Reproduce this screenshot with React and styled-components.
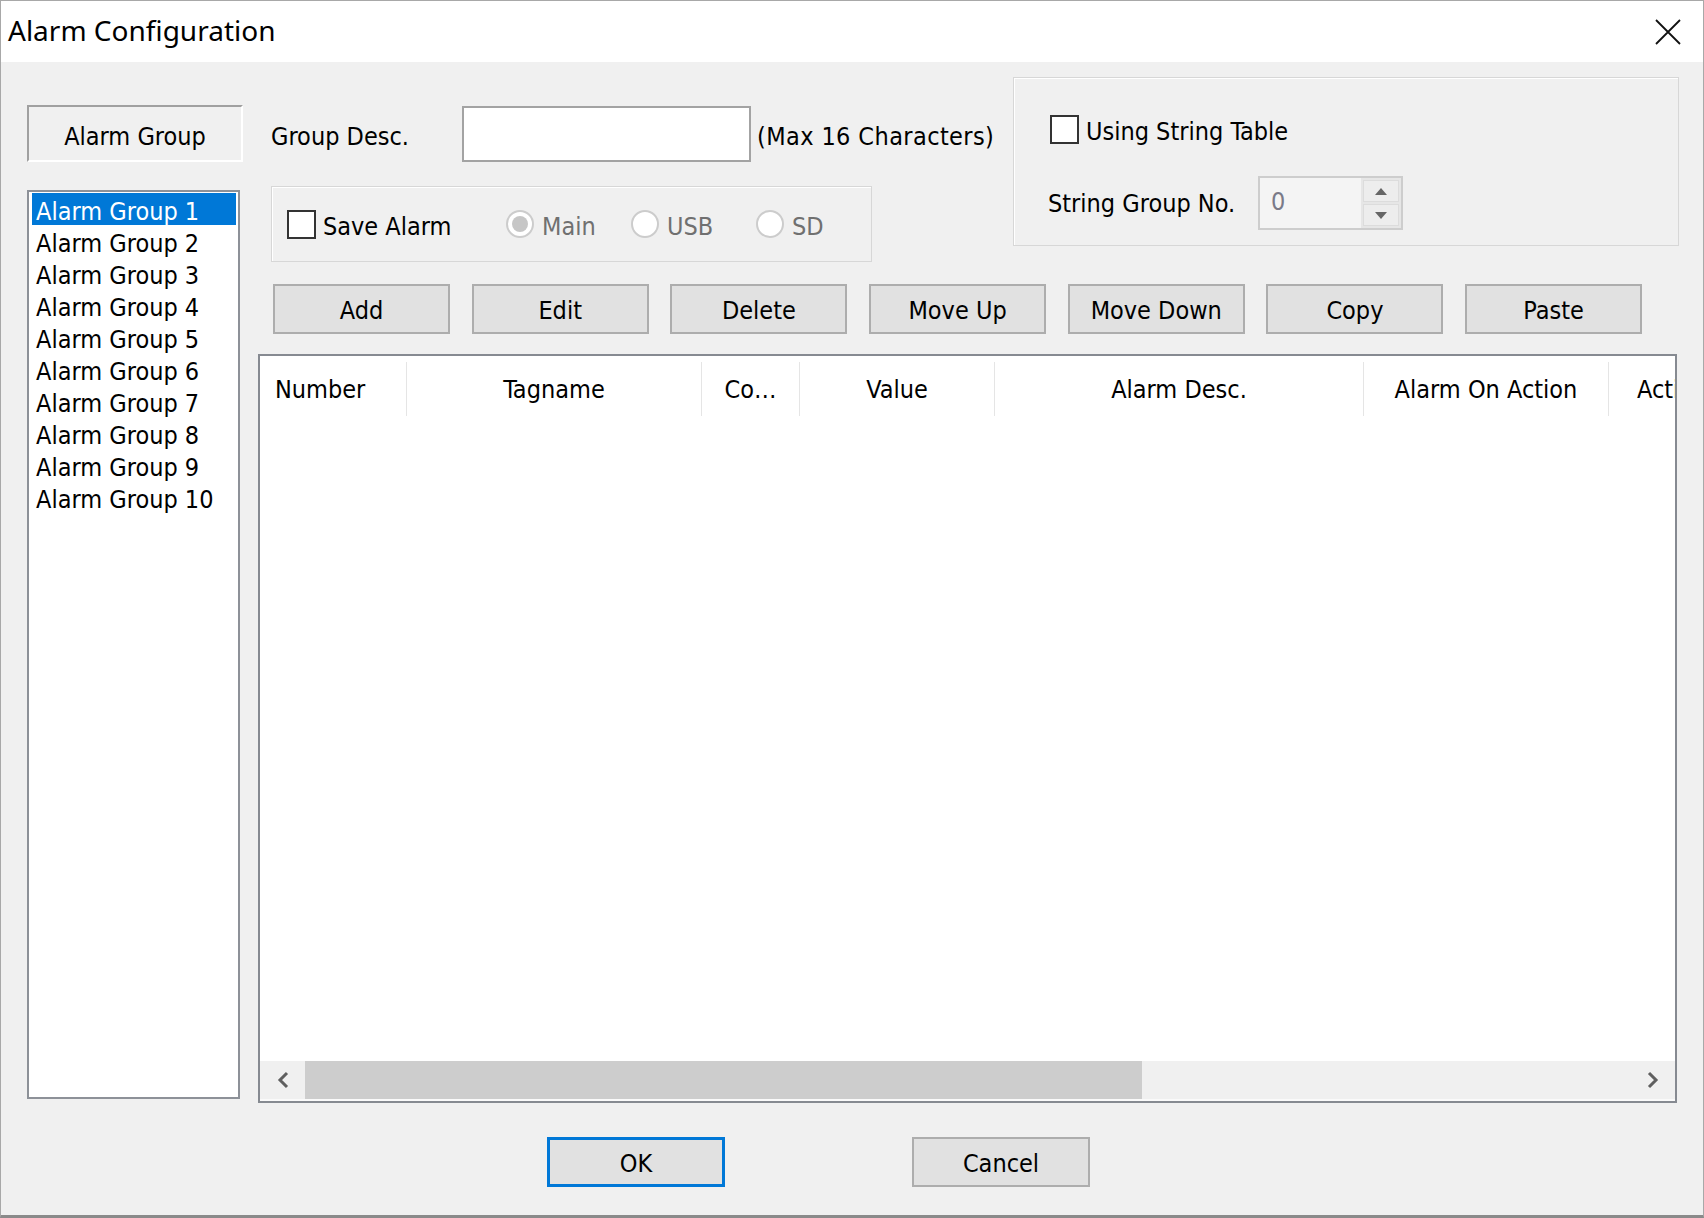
import React from "react";
import styled, { createGlobalStyle } from "styled-components";

const GlobalStyle = createGlobalStyle`
  body {
    margin: 0;
    background: #ffffff;
    font-family: "DejaVu Sans Condensed", "DejaVu Sans", "Liberation Sans", sans-serif;
    font-stretch: condensed;
  }
  * { box-sizing: border-box; }
`;

const groups = Array.from({ length: 10 }, (_, i) => `Alarm Group ${i + 1}`);
const actions = ["Add", "Edit", "Delete", "Move Up", "Move Down", "Copy", "Paste"];
const columns = [
  { title: "Number", width: 147, align: "flex-start", pad: 15 },
  { title: "Tagname", width: 295 },
  { title: "Co\u2026", width: 98 },
  { title: "Value", width: 195 },
  { title: "Alarm Desc.", width: 369 },
  { title: "Alarm On Action", width: 245 },
  { title: "Action Description", width: 300, align: "flex-start", pad: 28 },
];

const App = () => {
  return (
    <>
      <GlobalStyle />
      <Window>
        <TitleBar>
          <Title>Alarm Configuration</Title>
          <CloseIcon viewBox="0 0 26 26">
            <path d="M1 1 L25 25 M25 1 L1 25" stroke="#111" strokeWidth="1.8" />
          </CloseIcon>
        </TitleBar>

        <Body>
          <Main>
            <LeftCol>
              <GroupTab>Alarm Group</GroupTab>
              <List>
                {groups.map((g, i) => (
                  <ListItem key={g} $selected={i === 0}>
                    {g}
                  </ListItem>
                ))}
              </List>
            </LeftCol>

            <RightCol>
              <TopArea>
                <TopLeft>
                  <DescRow>
                    <Label>Group Desc.</Label>
                    <TextBox />
                    <Hint>(Max 16 Characters)</Hint>
                  </DescRow>
                  <SaveBox>
                    <CheckItem>
                      <CheckBox />
                      <Caption>Save Alarm</Caption>
                    </CheckItem>
                    <RadioItem>
                      <RadioCircle $checked />
                      <Caption>Main</Caption>
                    </RadioItem>
                    <RadioItem>
                      <RadioCircle />
                      <Caption>USB</Caption>
                    </RadioItem>
                    <RadioItem>
                      <RadioCircle />
                      <Caption>SD</Caption>
                    </RadioItem>
                  </SaveBox>
                </TopLeft>

                <StringBox>
                  <CheckRow>
                    <CheckBox />
                    <Caption>Using String Table</Caption>
                  </CheckRow>
                  <SpinRow>
                    <SpinLabel>String Group No.</SpinLabel>
                    <Spin>
                      <SpinValue>0</SpinValue>
                      <SpinButtons>
                        <SpinBtn>
                          <svg width="12" height="7" viewBox="0 0 12 7">
                            <path d="M0 7 L6 0 L12 7 Z" fill="#666" />
                          </svg>
                        </SpinBtn>
                        <SpinBtn>
                          <svg width="12" height="7" viewBox="0 0 12 7">
                            <path d="M0 0 L6 7 L12 0 Z" fill="#666" />
                          </svg>
                        </SpinBtn>
                      </SpinButtons>
                    </Spin>
                  </SpinRow>
                </StringBox>
              </TopArea>

              <ButtonsRow>
                {actions.map((a) => (
                  <Button key={a}>{a}</Button>
                ))}
              </ButtonsRow>

              <Table>
                <Header>
                  {columns.map((c) => (
                    <HeaderCell
                      key={c.title}
                      $width={c.width}
                      $align={c.align}
                      $pad={c.pad}
                    >
                      {c.title}
                    </HeaderCell>
                  ))}
                </Header>
                <TableBody />
                <HScroll>
                  <ScrollArrow>
                    <svg width="12" height="18" viewBox="0 0 12 18">
                      <path d="M10 2 L3 9 L10 16" fill="none" stroke="#5f5f5f" strokeWidth="3" />
                    </svg>
                  </ScrollArrow>
                  <Thumb />
                  <ScrollTrack />
                  <ScrollArrow>
                    <svg width="12" height="18" viewBox="0 0 12 18">
                      <path d="M2 2 L9 9 L2 16" fill="none" stroke="#5f5f5f" strokeWidth="3" />
                    </svg>
                  </ScrollArrow>
                </HScroll>
              </Table>
            </RightCol>
          </Main>

          <Footer>
            <DialogButton $default>OK</DialogButton>
            <DialogButton>Cancel</DialogButton>
          </Footer>
        </Body>
      </Window>
    </>
  );
};

export default App;

const Window = styled.div`
  width: 1704px;
  height: 1218px;
  border: 1px solid #a8a8a8;
  border-bottom: 3px solid #8a8a8a;
  background: #f0f0f0;
  display: flex;
  flex-direction: column;
  font-size: 25px;
  color: #000;
`;

const TitleBar = styled.div`
  height: 61px;
  background: #ffffff;
  display: flex;
  align-items: center;
  justify-content: space-between;
  padding-left: 7px;
  padding-right: 22px;
`;

const Title = styled.div`
  font-family: "Noto Sans", "Open Sans", sans-serif;
  font-stretch: normal;
  font-size: 28px;
  padding-bottom: 4px;
`;

const CloseIcon = styled.svg`
  width: 26px;
  height: 26px;
`;

const Body = styled.div`
  flex: 1;
  display: flex;
  flex-direction: column;
  padding: 15px 24px 0 26px;
`;

const Main = styled.div`
  display: flex;
`;

const LeftCol = styled.div`
  width: 216px;
  padding-top: 28px;
  display: flex;
  flex-direction: column;
`;

const GroupTab = styled.div`
  height: 57px;
  border-top: 2px solid #a0a0a0;
  border-left: 2px solid #a0a0a0;
  border-right: 2px solid #ffffff;
  border-bottom: 2px solid #ffffff;
  display: flex;
  align-items: center;
  justify-content: center;
  padding-top: 5px;
`;

const List = styled.div`
  margin-top: 28px;
  width: 213px;
  height: 909px;
  border: 2px solid #8d9198;
  background: #ffffff;
  padding: 1px;
`;

const ListItem = styled.div`
  height: 32px;
  margin: 0 1px 0 2px;
  padding: 5px 0 0 4px;
  display: flex;
  align-items: center;
  white-space: nowrap;
  background: ${(p) => (p.$selected ? "#0078d7" : "transparent")};
  color: ${(p) => (p.$selected ? "#ffffff" : "#000000")};
`;

const RightCol = styled.div`
  margin-left: 15px;
  width: 1421px;
  display: flex;
  flex-direction: column;
`;

const TopArea = styled.div`
  height: 185px;
  display: flex;
`;

const TopLeft = styled.div`
  width: 755px;
  padding: 29px 0 0 13px;
`;

const DescRow = styled.div`
  height: 56px;
  display: flex;
  align-items: center;
`;

const Label = styled.div`
  width: 191px;
  padding-top: 4px;
`;

const TextBox = styled.div`
  width: 289px;
  height: 56px;
  background: #ffffff;
  border: 2px solid #a3a3a3;
`;

const Hint = styled.div`
  margin-left: 6px;
  padding-top: 4px;
  white-space: nowrap;
  letter-spacing: 0.4px;
`;

const SaveBox = styled.div`
  margin-top: 24px;
  width: 601px;
  height: 76px;
  border: 1px solid #d7d7d7;
  box-shadow: inset 1px 1px 0 #ffffff;
  display: flex;
  align-items: center;
  padding-left: 15px;
  overflow: visible;
`;

const Caption = styled.span`
  padding-top: 4px;
  white-space: nowrap;
`;

const CheckItem = styled.div`
  flex: 0 0 219px;
  display: flex;
  align-items: center;
`;

const CheckBox = styled.div`
  width: 29px;
  height: 29px;
  border: 2px solid #333333;
  background: #ffffff;
  margin-right: 7px;
  flex-shrink: 0;
`;

const RadioItem = styled.div`
  flex: 0 0 125px;
  display: flex;
  align-items: center;
  color: #707070;
`;

const RadioCircle = styled.div`
  width: 28px;
  height: 28px;
  flex-shrink: 0;
  border-radius: 50%;
  border: 2px solid #cccccc;
  background: #ffffff;
  margin-right: 8px;
  display: flex;
  align-items: center;
  justify-content: center;

  &::after {
    content: "";
    width: 16px;
    height: 16px;
    border-radius: 50%;
    background: ${(p) => (p.$checked ? "#c6c6c6" : "transparent")};
  }
`;

const StringBox = styled.div`
  width: 666px;
  height: 169px;
  border: 1px solid #d7d7d7;
  box-shadow: inset 1px 1px 0 #ffffff;
  padding: 37px 0 0 34px;
  display: flex;
  flex-direction: column;
`;

const CheckRow = styled.div`
  height: 29px;
  display: flex;
  align-items: center;
  padding-left: 2px;
`;

const SpinRow = styled.div`
  margin-top: 32px;
  display: flex;
  align-items: center;
`;

const SpinLabel = styled.div`
  width: 210px;
`;

const Spin = styled.div`
  width: 145px;
  height: 54px;
  border: 2px solid #cdcdcd;
  background: #f4f4f4;
  display: flex;
`;

const SpinValue = styled.div`
  flex: 1;
  padding-left: 11px;
  color: #7a7a88;
  display: flex;
  align-items: center;
  padding-bottom: 4px;
`;

const SpinButtons = styled.div`
  width: 40px;
  display: flex;
  flex-direction: column;
  gap: 2px;
  padding: 2px;
  background: #e6e6e6;
`;

const SpinBtn = styled.div`
  flex: 1;
  background: #ededed;
  border: 1px solid #dcdcdc;
  display: flex;
  align-items: center;
  justify-content: center;
`;

const ButtonsRow = styled.div`
  margin-top: 22px;
  padding-left: 15px;
  display: flex;
  gap: 21.7px;
`;

const Button = styled.div`
  width: 177px;
  height: 50px;
  background: #e1e1e1;
  border: 2px solid #adadad;
  display: flex;
  align-items: center;
  justify-content: center;
  padding-top: 2px;
  white-space: nowrap;
`;

const Table = styled.div`
  margin-top: 20px;
  width: 1419px;
  height: 749px;
  border: 2px solid #868a91;
  background: #ffffff;
  display: flex;
  flex-direction: column;
  overflow: hidden;
`;

const Header = styled.div`
  height: 60px;
  padding-top: 6px;
  display: flex;
`;

const HeaderCell = styled.div`
  flex: 0 0 ${(p) => p.$width}px;
  border-right: 1px solid #e5e5e5;
  display: flex;
  align-items: center;
  justify-content: ${(p) => p.$align || "center"};
  padding-left: ${(p) => p.$pad || 0}px;
  white-space: nowrap;
  overflow: hidden;
`;

const TableBody = styled.div`
  flex: 1;
`;

const HScroll = styled.div`
  height: 40px;
  background: #f0f0f0;
  border-bottom: 2px solid #fafafa;
  display: flex;
  align-items: stretch;
`;

const ScrollArrow = styled.div`
  width: 45px;
  display: flex;
  align-items: center;
  justify-content: center;
`;

const Thumb = styled.div`
  width: 837px;
  background: #cdcdcd;
`;

const ScrollTrack = styled.div`
  flex: 1;
`;

const Footer = styled.div`
  margin-top: 34px;
  padding-left: 520px;
  display: flex;
  gap: 187px;
`;

const DialogButton = styled.div`
  width: 178px;
  height: 50px;
  background: #e1e1e1;
  border: ${(p) => (p.$default ? "3px solid #0078d7" : "2px solid #adadad")};
  display: flex;
  align-items: center;
  justify-content: center;
  padding-top: 2px;
`;
